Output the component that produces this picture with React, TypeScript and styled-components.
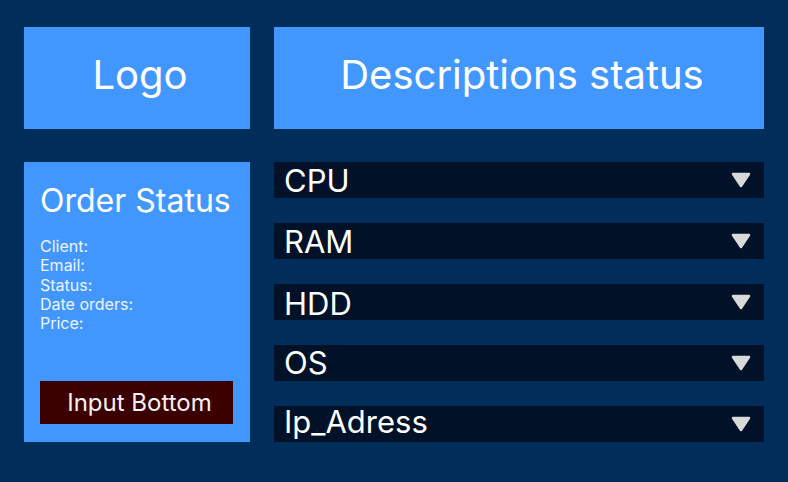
import React from "react";
import styled, { createGlobalStyle } from "styled-components";

const Global = createGlobalStyle`
  html, body { margin: 0; padding: 0; background: #012d5a; }
  body { font-family: Inter, "Noto Sans", sans-serif; }
`;

const Page = styled.div`
  width: 788px;
  height: 482px;
  box-sizing: border-box;
  padding: 27px 24px 40px 24px;
  display: grid;
  grid-template-columns: 226px 490px;
  grid-template-rows: 102px 280px;
  column-gap: 24px;
  row-gap: 33px;
  background: #012d5a;
`;

const HeaderBox = styled.div`
  background: #4297ff;
  color: #ffffff;
  font-size: 40px;
  display: flex;
  align-items: center;
  justify-content: center;
  padding: 0 0 8px 6px;
  box-sizing: border-box;
`;

const OrderPanel = styled.div`
  background: #4297ff;
  color: #ffffff;
  box-sizing: border-box;
  padding: 20px 17px 18px 16px;
  display: flex;
  flex-direction: column;
`;

const OrderTitle = styled.div`
  font-size: 32px;
  line-height: 38px;
  white-space: nowrap;
`;

const Fields = styled.div`
  margin-top: 17px;
  display: flex;
  flex-direction: column;
  font-size: 16px;
  line-height: 19.3px;
  color: #eef4ff;
`;

const ActionButton = styled.button`
  margin-top: auto;
  height: 43px;
  width: 193px;
  border: none;
  background: #3b0000;
  color: #f2f2f2;
  font-family: Inter, "Noto Sans", sans-serif;
  font-size: 24px;
  padding: 0 0 0 6px;
  display: flex;
  align-items: center;
  justify-content: center;
  cursor: pointer;
`;

const List = styled.div`
  display: flex;
  flex-direction: column;
  gap: 25px;
`;

const Row = styled.div`
  height: 36px;
  background: #011127;
  display: flex;
  align-items: center;
  justify-content: space-between;
  padding: 0 13px 0 10px;
  box-sizing: border-box;
`;

const RowLabel = styled.span<{ $shift: number }>`
  color: #ffffff;
  font-size: 31px;
  line-height: 36px;
  transform: translateY(${(p) => p.$shift}px);
`;

const Arrow = () => (
  <svg width="20" height="16" viewBox="0 0 20 16">
    <path
      d="M2 2 L18 2 L10 14 Z"
      fill="#d9d9d9"
      stroke="#d9d9d9"
      strokeWidth="2.5"
      strokeLinejoin="round"
    />
  </svg>
);

const rows = [
  { label: "CPU", shift: 1 },
  { label: "RAM", shift: 1 },
  { label: "HDD", shift: 2 },
  { label: "OS", shift: 0 },
  { label: "Ip_Adress", shift: -2 },
];

export default function App() {
  return (
    <>
      <Global />
      <Page>
        <HeaderBox>Logo</HeaderBox>
        <HeaderBox>Descriptions status</HeaderBox>
        <OrderPanel>
          <OrderTitle>Order Status</OrderTitle>
          <Fields>
            <span>Client:</span>
            <span>Email:</span>
            <span>Status:</span>
            <span>Date orders:</span>
            <span>Price:</span>
          </Fields>
          <ActionButton>Input Bottom</ActionButton>
        </OrderPanel>
        <List>
          {rows.map((r) => (
            <Row key={r.label}>
              <RowLabel $shift={r.shift}>{r.label}</RowLabel>
              <Arrow />
            </Row>
          ))}
        </List>
      </Page>
    </>
  );
}
